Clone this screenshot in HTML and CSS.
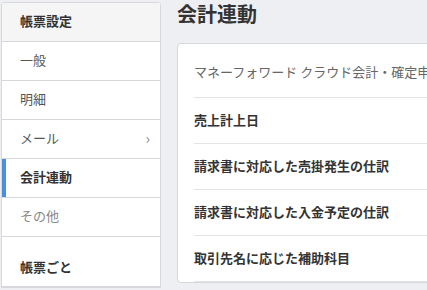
FILE: index.html
```html
<!DOCTYPE html>
<html lang="ja">
<head>
  <meta charset="UTF-8" />
  <title>会計連動</title>
  <meta name="viewport" content="width=device-width, initial-scale=1" />
  <link rel="stylesheet" href="styles.css">
</head>
<body>
  <div class="page">
    <aside class="side-menu">
      <div class="menu-head">帳票設定</div>
      <a class="menu-item" href="#">一般</a>
      <a class="menu-item" href="#">明細</a>
      <a class="menu-item has-sub" href="#">メール<span class="chev">›</span></a>
      <a class="menu-item active" href="#">会計連動</a>
      <a class="menu-item muted" href="#">その他</a>
      <div class="menu-head section">帳票ごと</div>
    </aside>

    <main class="content">
      <h1 class="page-title">会計連動</h1>
      <div class="card">
        <div class="card-row intro">マネーフォワード クラウド会計・確定申告との連携設定</div>
        <div class="card-row">売上計上日</div>
        <div class="card-row">請求書に対応した売掛発生の仕訳</div>
        <div class="card-row">請求書に対応した入金予定の仕訳</div>
        <div class="card-row">取引先名に応じた補助科目</div>
      </div>
    </main>
  </div>
</body>
</html>
```

FILE: styles.css
```css
html, body {
  margin: 0; padding: 0;
  background: #eeeff3;
  font-family: "Noto Sans CJK JP", "Noto Sans", sans-serif;
  overflow: hidden;
}
.page {
  display: flex;
  align-items: flex-start;
  padding: 2px 0 0 1px;
  width: 800px;
}
/* --- side menu --- */
.side-menu {
  width: 158px;
  flex: none;
  background: #fff;
  border: 1px solid #d6d8dc;
  border-radius: 3px 3px 0 0;
}
.menu-head {
  height: 38px;
  line-height: 36px;
  padding-left: 18px;
  background: #f5f5f6;
  font-size: 13px;
  font-weight: 700;
  color: #333;
  border-bottom: 1px solid #d6d8dc;
}
.menu-head.section {
  background: #fff;
  height: 50px;
  line-height: 14px;
  padding-top: 23px;
  box-sizing: border-box;
}
.menu-item {
  display: flex;
  align-items: center;
  justify-content: space-between;
  height: 38px;
  padding: 0 10px 2px 18px;
  box-sizing: content-box;
  font-size: 13px;
  line-height: 16px;
  color: #555;
  text-decoration: none;
  border-bottom: 1px solid #d6d8dc;
  position: relative;
}
.menu-item { height: 36px; }
.menu-item .chev {
  font-size: 15px;
  color: #888;
}
.menu-item.muted { color: #888; }
.menu-item.active {
  font-weight: 700;
  color: #333;
}
.menu-item.active::before {
  content: "";
  position: absolute;
  left: 0; top: 0; bottom: 0;
  width: 4px;
  background: #4a90e2;
}
/* --- main content --- */
.content {
  flex: none;
  width: 600px;
  margin-left: 16px;
}
.page-title {
  margin: 0;
  height: 41px;
  line-height: 24px;
  font-size: 20px;
  font-weight: 700;
  color: #333;
}
.card {
  background: #fff;
  border: 1px solid #d6d8dc;
  border-radius: 4px;
  padding: 0 16px;
}
.card-row {
  height: 45px;
  line-height: 44px;
  font-size: 13px;
  font-weight: 700;
  color: #333;
  border-bottom: 1px solid #e3e4e8;
}
.card-row.intro {
  height: 53px;
  line-height: 55px;
  font-weight: 400;
  color: #666;
}
```
